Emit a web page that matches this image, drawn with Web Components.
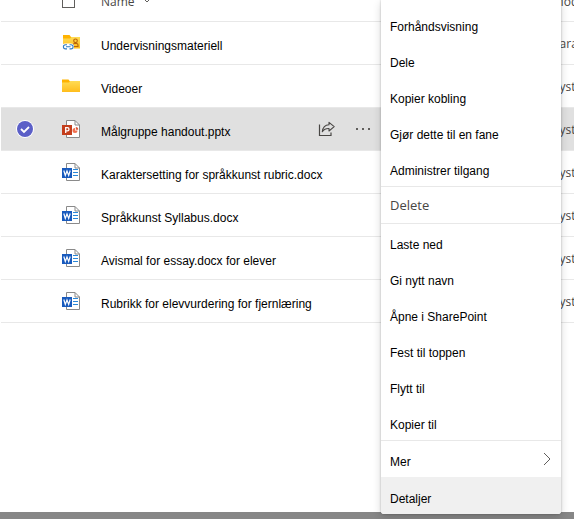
<!DOCTYPE html>
<html lang="nb">
<head>
<meta charset="utf-8">
<title>Filer</title>
<style>
  html, body { height: 100%; }
  body { margin: 0; background: #fff; overflow: hidden; font: 12px/16px "Liberation Sans", Arial, sans-serif; color: #000; }
</style>
</head>
<body>
<files-app>
  <file-list></file-list>
  <context-menu slot="menu">
    <menu-group>
      <menu-item>Forhåndsvisning</menu-item>
      <menu-item>Dele</menu-item>
      <menu-item>Kopier kobling</menu-item>
      <menu-item>Gjør dette til en fane</menu-item>
      <menu-item>Administrer tilgang</menu-item>
    </menu-group>
    <menu-group>
      <menu-item muted>Delete</menu-item>
    </menu-group>
    <menu-group>
      <menu-item>Laste ned</menu-item>
      <menu-item>Gi nytt navn</menu-item>
      <menu-item>Åpne i SharePoint</menu-item>
      <menu-item>Fest til toppen</menu-item>
      <menu-item>Flytt til</menu-item>
      <menu-item>Kopier til</menu-item>
    </menu-group>
    <menu-group>
      <menu-item submenu>Mer</menu-item>
      <menu-item active>Detaljer</menu-item>
    </menu-group>
  </context-menu>
</files-app>

<script>
const define = (name, html, setup) => {
  const template = document.createElement('template');
  template.innerHTML = html;
  customElements.define(name, class extends HTMLElement {
    constructor() {
      super();
      this.attachShadow({ mode: 'open' }).append(template.content.cloneNode(true));
    }
    connectedCallback() { if (setup) setup(this, this.shadowRoot); }
  });
};

const doc = `<path d="M4.500.5h8.500l4.500 4.500v12.500h-13z" fill="#fff" stroke="#8a8a8a"/><path d="M13 .5v4.500h4.500" fill="none" stroke="#8a8a8a"/>`;
const icons = {
  folder: `<path d="M0 2.500h6.500l1.500 2h10V7H0z" fill="#ffb300"/><path d="M0 5.500h7l1.500-1.500H18v11H0z" fill="url(#g)"/>`,
  shared: `<path d="M1 1h6.500l1.500 2h9v3H1z" fill="#ffb300"/><path d="M1 4.500h7L9.500 3H18v11.500H1z" fill="url(#g)"/>
    <circle cx="13.500" cy="6.800" r="1.800" fill="none" stroke="#b8620a" stroke-width="1.100"/><path d="M11.200 12.500v-1.500q0-1.500 1.500-1.500h1.800q1.500 0 1.500 1.500v1.500z" fill="none" stroke="#b8620a" stroke-width="1.100"/>
    <rect x="0" y="9.500" width="12" height="6.500" rx="3" fill="#fff"/>
    <path d="M5 10.700H3.500a2.100 2.100 0 0 0 0 4.200H5M7.500 10.700H9a2.100 2.100 0 0 1 0 4.200H7.500M4 12.800h4.500" fill="none" stroke="#2f7cc4" stroke-width="1.100"/>`,
  word: doc + `<path d="M11 6.500h5M11 9.500h5M11 12.500h5" stroke="#2b88d8"/><path d="M0 5h10v10H0z" fill="#185abd"/><path d="M1.800 7.500l1.500 5L5 8l1.700 4.500 1.500-5" fill="none" stroke="#fff" stroke-width="1.200"/>`,
  powerpoint: doc + `<path d="M13 8a2.500 2.500 0 1 0 2.500 2.500H13z" fill="#f07050"/><path d="M13.800 7v2.700h2.400A2.500 2.500 0 0 0 13.800 7z" fill="#e05a3a"/><path d="M0 5h10v10H0z" fill="#c43e1c"/><path d="M3.700 13V7.600h1.700a1.500 1.500 0 0 1 0 3.200H3.700" fill="none" stroke="#fff" stroke-width="1.300"/>`
};

define('file-icon', `
<style>
  :host { display: block; width: 18px; height: 18px; }
  svg { display: block; }
</style>`, (host, root) => {
  root.innerHTML += `<svg width="18" height="18" viewBox="0 0 18 18" aria-hidden="true">
    <defs><linearGradient id="g" x2="0" y2="1"><stop stop-color="#ffdc55"/><stop offset="1" stop-color="#ffbd1c"/></linearGradient></defs>
    ${icons[host.getAttribute('kind')]}</svg>`;
});

define('round-check', `
<style>
  :host { display: block; width: 16px; height: 16px; }
  label { display: grid; width: 16px; height: 16px; background: #5b5fc7; border-radius: 50%; box-shadow: 0 0 0 1px #fff; }
  input, svg { grid-area: 1 / 1; margin: 0; width: 16px; height: 16px; }
  input { appearance: none; }
</style>
<label><input type="checkbox" checked aria-label="Velg Målgruppe handout.pptx">
<svg viewBox="0 0 16 16" aria-hidden="true"><path d="M4 8l3 3 5-5" fill="none" stroke="#fff" stroke-width="1.800"/></svg></label>`);

define('row-actions', `
<style>
  :host { display: flex; align-items: center; gap: 20px; }
  button { display: block; margin: 0; padding: 0; border: 0; background: none; }
  svg { display: block; }
</style>
<button type="button" aria-label="Del"><svg width="18" height="16" viewBox="0 0 18 16">
  <path d="M1.500 3.500v11h11.500v-3" fill="none" stroke="#484644" stroke-width="1.200"/>
  <path d="M11 1.300l5.200 4.300L11 10V7.500C8 7.300 5.800 8.500 4.300 10.700 4.800 6.500 7.300 4 11 3.800z" fill="none" stroke="#484644" stroke-width="1.100" stroke-linejoin="round"/>
</svg></button>
<button type="button" aria-label="Flere alternativer"><svg width="16" height="16" viewBox="0 0 16 16" fill="#605e5c">
  <path d="M0 7h2v2H0zM6 7h2v2H6zM12 7h2v2h-2z"/>
</svg></button>`);

define('file-list', `
<style>
  :host { display: block; padding-left: 1px; }
  table { width: 100%; margin-top: -21px; border-collapse: separate; border-spacing: 0; table-layout: fixed; }
  .select { width: 61px; } .icon { width: 39px; } .actions { width: 235px; } .author { width: 21px; }
  th, td { height: 42px; padding: 0; border-bottom: 1px solid #e8e8e8; text-align: left; vertical-align: middle; font-weight: normal; white-space: nowrap; }
  tr.selected td { background: #e0e0e0; }
  round-check { margin-left: 16px; }
  a { display: block; padding-top: 6px; color: inherit; text-decoration: none; }
  th input { appearance: none; display: block; box-sizing: border-box; width: 13px; height: 13px; margin: 2px 0 0; border: 1px solid #605e5c; background: #fff; }
  th button { display: flex; align-items: center; gap: 8px; margin: 0; padding: 4px 0 0; border: 0; background: none; font: 12px/16px "Open Sans", sans-serif; color: #484644; }
  th svg { margin-top: -2px; }
  .by { overflow: hidden; font: 12px/16px "Open Sans", sans-serif; color: #484644; }
  th.by { padding-top: 4px; height: 38px; }
  td.by { padding-top: 2px; height: 40px; }
</style>
<table>
  <colgroup><col class="select"><col class="icon"><col><col class="actions"><col class="author"></colgroup>
  <thead><tr>
    <th></th>
    <th><input type="checkbox" aria-label="Velg alle"></th>
    <th><button type="button">Name <svg width="8" height="6" viewBox="0 0 8 6" aria-hidden="true"><path d="M1 1l3 3 3-3" fill="none" stroke="#605e5c"/></svg></button></th>
    <th></th>
    <th class="by">Modified By</th>
  </tr></thead>
  <tbody></tbody>
</table>`, (host, root) => {
  const files = [
    ['shared', 'Undervisningsmateriell', 'Sara'],
    ['folder', 'Videoer', 'System'],
    ['powerpoint', 'Målgruppe handout.pptx', 'System', true],
    ['word', 'Karaktersetting for språkkunst rubric.docx', 'System'],
    ['word', 'Språkkunst Syllabus.docx', 'System'],
    ['word', 'Avismal for essay.docx for elever', 'System'],
    ['word', 'Rubrikk for elevvurdering for fjernlæring', 'System']
  ];
  root.querySelector('tbody').innerHTML = files.map(([kind, name, by, selected]) => `
    <tr${selected ? ' class="selected"' : ''}>
      <td>${selected ? '<round-check></round-check>' : ''}</td>
      <td><file-icon kind="${kind}"></file-icon></td>
      <td><a href="#">${name}</a></td>
      <td>${selected ? '<row-actions></row-actions>' : ''}</td>
      <td class="by">${by}</td>
    </tr>`).join('');
});

define('menu-item', `
<style>
  :host { display: block; }
  button { display: flex; align-items: center; justify-content: space-between; box-sizing: border-box; width: 100%; height: 36px; margin: 0; padding: 6px 9px 0 9px; border: 0; background: none; font: inherit; color: inherit; text-align: left; }
  svg { display: none; }
  :host([submenu]) svg { display: block; margin-top: -6px; }
  :host([muted]) button { padding-top: 0; font: 13px/18px "Open Sans", sans-serif; color: #484644; }
  :host([active]) button { height: 37px; background: #f0f0f0; }
</style>
<button type="button" role="menuitem"><span><slot></slot></span>
<svg width="10" height="14" viewBox="0 0 10 14" aria-hidden="true"><path d="M2 1l6 6-6 6" fill="none" stroke="#605e5c"/></svg></button>`);

define('menu-group', `
<style>
  :host { display: block; border-bottom: 1px solid #e8e8e8; }
  :host(:last-child) { border-bottom: 0; }
</style>
<slot></slot>`);

define('context-menu', `
<style>
  :host { display: block; width: 180px; padding-top: 6px; background: #fff; border-radius: 0 0 3px 3px; overflow: hidden; box-shadow: 0 0 2px rgba(0,0,0,.3), 0 3px 8px rgba(0,0,0,.16); }
</style>
<div role="menu"><slot></slot></div>`);

define('files-app', `
<style>
  :host { display: flex; flex-direction: column; position: relative; height: 100%; overflow: hidden; }
  main { flex: 1; min-height: 0; overflow: hidden; }
  footer { height: 7px; background: #868686; }
  ::slotted([slot="menu"]) { position: absolute; top: 0; right: 13px; }
</style>
<main><slot></slot></main>
<footer></footer>
<slot name="menu"></slot>`);
</script>
</body>
</html>
